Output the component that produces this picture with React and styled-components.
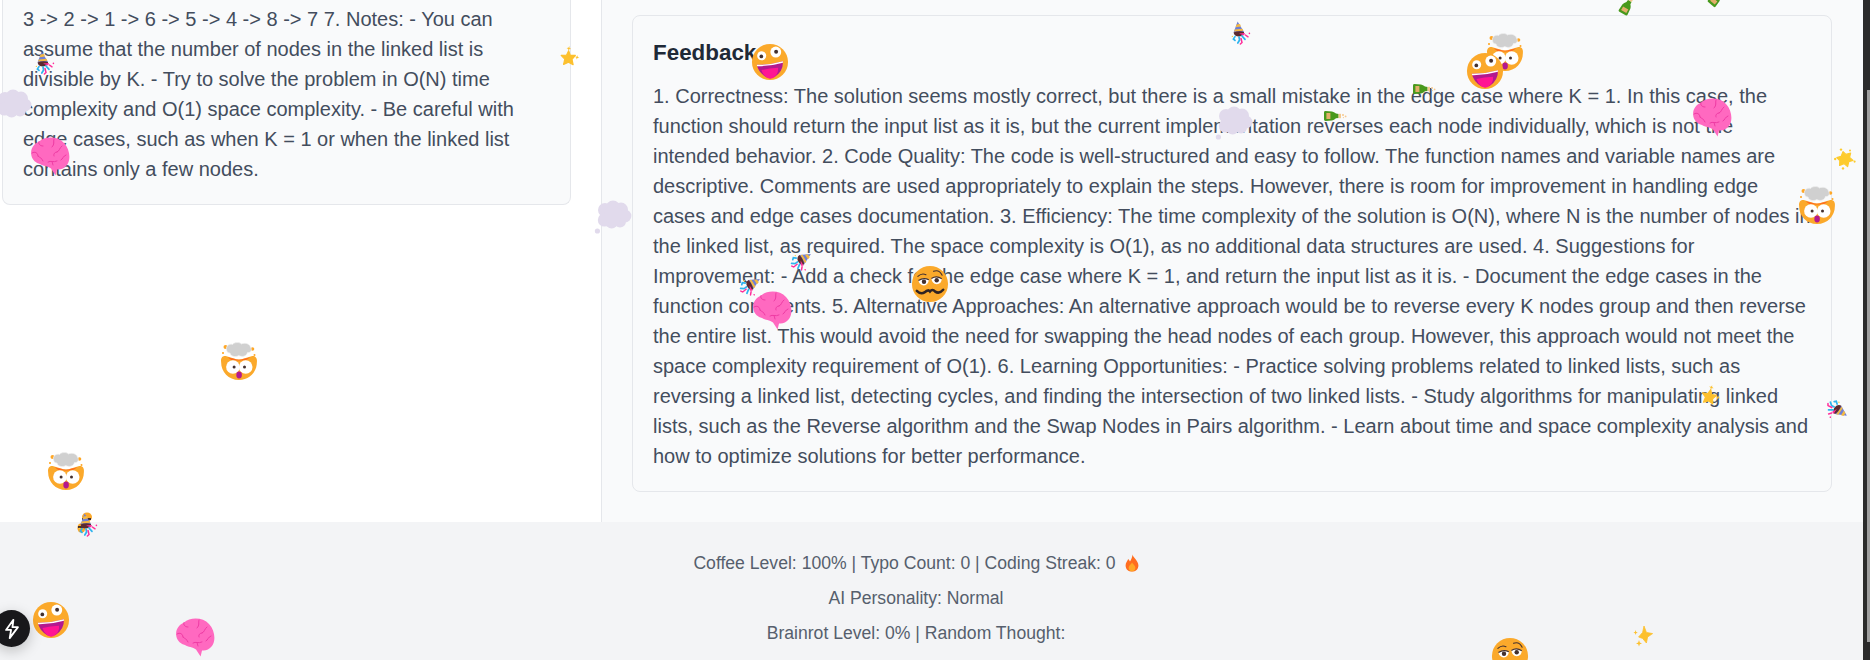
import React from "react";
import styled, { createGlobalStyle } from "styled-components";

const GlobalStyle = createGlobalStyle`
  html, body {
    margin: 0;
    height: 100%;
    overflow: hidden;
    background: #ffffff;
    font-family: "Liberation Sans", Arial, sans-serif;
  }
`;

const Page = styled.div`
  display: flex;
  width: 1870px;
  height: 660px;
  overflow: hidden;
`;

const Viewport = styled.div`
  position: relative;
  flex: 1;
  display: flex;
  flex-direction: column;
  overflow: hidden;
`;

const Main = styled.main`
  display: grid;
  grid-template-columns: 602px 1fr;
  height: 522px;
`;

const LeftPanel = styled.section`
  padding: 0 30px 0 2px;
  background: #ffffff;
  border-right: 1px solid #e5e7eb;
`;

const RightPanel = styled.section`
  padding: 15px 31px 0 30px;
  background: #f9fafb;
`;

const Card = styled.div`
  background: #f9fafb;
  border: 1px solid #e5e7eb;
  border-radius: 8px;
  padding: 20px;
`;

// the left card is scrolled, so its top edge is out of the window
const ScrolledCard = styled(Card)`
  border-top: none;
  border-radius: 0 0 8px 8px;
  padding-top: 4px;
`;

const Title = styled.h2`
  margin: 0 0 12px;
  font-size: 22.4px;
  line-height: 33px;
  font-weight: 700;
  color: #1f2937;
`;

const Body = styled.p`
  margin: 0;
  font-size: 20px;
  line-height: 30px;
  color: #434d5d;
`;

const Footer = styled.footer`
  flex: 1;
  display: flex;
  flex-direction: column;
  align-items: center;
  gap: 11px;
  padding: 29px 31px 0 0;
  background: #f3f4f6;
`;

const FooterLine = styled.div`
  display: flex;
  align-items: center;
  height: 24px;
  font-size: 17.6px;
  color: #565f6d;
`;

const FlameIcon = styled.svg`
  margin-left: 9px;
`;

const ScrollTrack = styled.div`
  width: 7px;
  padding: 90px 0 0 4px;
  box-sizing: border-box;
  background: #2b2b2b;
`;

const ScrollThumb = styled.div`
  height: 552px;
  background: #9f9f9f;
`;

const Floater = styled.div`
  position: absolute;
  left: ${(p) => p.$x}px;
  top: ${(p) => p.$y}px;
  transform: translate(-50%, -50%) rotate(${(p) => p.$rotate || 0}deg);
  line-height: 0;
  pointer-events: none;
`;

const DevButton = styled.div`
  position: absolute;
  left: -7px;
  top: 610px;
  width: 37px;
  height: 37px;
  display: flex;
  align-items: center;
  justify-content: center;
  border-radius: 50%;
  background: #18181b;
  box-shadow: 0 4px 14px rgba(0, 0, 0, 0.22);
`;

const Zany = () => (
  <svg width="37" height="37" viewBox="0 0 32 32">
    <circle cx="16" cy="16" r="15.6" fill="#fba92b" />
    <circle cx="8.8" cy="10.6" r="3.9" fill="#fff" />
    <circle cx="8.5" cy="11.2" r="1.6" fill="#43302f" />
    <circle cx="21" cy="7.4" r="4.7" fill="#fff" />
    <circle cx="21.3" cy="7.2" r="1.7" fill="#43302f" />
    <path d="M4.6 18.4 Q16 18.6 27.2 15.4 Q27.6 24 20 29 Q16 31 12.4 29 Q6 25 4.6 18.4Z" fill="#b3198f" />
    <path d="M4.6 18.4 Q16 18.6 27.2 15.4 L27.2 16.6 Q16 19.8 4.9 19.6Z" fill="#fff" />
    <path d="M8.6 23 Q15 21.5 23 21 Q23.5 27 18 30 Q15.5 31 13 29.4 Q9.5 26.5 8.6 23Z" fill="#ff1493" />
  </svg>
);

const MindBlown = () => (
  <svg width="37" height="38" viewBox="0 0 37 38">
    <circle cx="5" cy="5" r="2" fill="#ffa726" />
    <circle cx="32" cy="7" r="1.8" fill="#ffa726" />
    <circle cx="2.5" cy="11" r="1.1" fill="#ffa726" />
    <circle cx="34" cy="13" r="1" fill="#ffa726" />
    <path d="M16.5 13 h4.5 v6 h-4.5Z" fill="#fff" />
    <path d="M6 8 C5 3 10 1.5 12 2.5 C14 0 19 0 21 2 C24 0.5 29 1.5 30 5 C32 8 30 11 27 10.5 C26 15 20 15 18.5 13.5 C15 15.5 10 14.5 9.5 11 C7.5 11 6.5 10 6 8Z" fill="#d0d0d0" stroke="#f0f0f0" strokeWidth="0.7" />
    <path d="M0.6 20 C0 15 3 13.6 6 14.2 L13.5 16.6 Q18.5 18.6 23.5 16.6 L31 14.2 C34 13.6 37 15 36.4 20 C36.4 30 29 38 18.5 38 C8 38 0.6 30 0.6 20Z" fill="#fba92b" />
    <path d="M7 15.2 L13.5 16.8 Q18.5 18.8 23.5 16.8 L30 15.2 Q26 18.4 22.5 18.2 Q18.5 19 14.5 18.2 Q10 18.4 7 15.2Z" fill="#ff6b1f" />
    <circle cx="12.4" cy="25" r="6.8" fill="#fff" />
    <circle cx="25.2" cy="25" r="6.8" fill="#fff" />
    <circle cx="13.6" cy="25" r="1.5" fill="#43302f" />
    <circle cx="24" cy="25" r="1.5" fill="#43302f" />
    <ellipse cx="18.6" cy="33" rx="2.8" ry="3.4" fill="#b3198f" />
  </svg>
);

const Brain = () => (
  <svg width="40" height="40" viewBox="0 0 40 40">
    <path d="M1.5 20 C0 14 3 8 9 5.5 C15 0 28 0 34 7 C40 13 41 24 37 29 C34 33 30 34 27 33.4 L25.6 39.6 L21 32.6 C18 30 13 30 10 28 C6 27 2.5 24 1.5 20Z" fill="#ff69c0" />
    <g fill="none" stroke="#ef3ba4" strokeWidth="1" strokeLinecap="round">
      <path d="M9 5.6 C8 8 10 10 13 10" />
      <path d="M2 17 C5 15 8 17 8 20 M8 20 C10 22 12 22 13 25" />
      <path d="M24 3 C23 6 25 8 22 11" />
      <path d="M32 10 C29 12 30 15 27 16 M27 16 C25 16 23 18 24 20" />
      <path d="M18 26 C21 24 23 27 27 25 M22 25.4 L23 29 M36 19 C33 20 33 23 31 24" />
    </g>
  </svg>
);

const Woozy = () => (
  <svg width="37" height="37" viewBox="0 0 32 32">
    <circle cx="16" cy="16" r="15.6" fill="#fba92b" />
    <path d="M5.5 9.5 Q9 6 12.5 8 M19 5 Q24 3 26.5 8.5" fill="none" stroke="#43302f" strokeWidth="0.9" strokeLinecap="round" />
    <path d="M6 13 Q10.5 10 15 12.4 Q14.6 17 10.6 17.4 Q7 17 6 13Z" fill="#fff" />
    <path d="M17.2 11.2 Q21.6 8.4 26.2 11.4 Q26 16 21.8 16.2 Q17.8 15.8 17.2 11.2Z" fill="#fff" />
    <path d="M6 13 Q10.5 10 15 12.4 M17.2 11.2 Q21.6 8.4 26.2 11.4" fill="none" stroke="#43302f" strokeWidth="1" />
    <circle cx="10.8" cy="14" r="1.9" fill="#43302f" />
    <circle cx="21.8" cy="12.8" r="1.9" fill="#43302f" />
    <path d="M4.6 22 Q8 25.4 11.6 23 Q14.5 20.4 16 22.4 Q18 20 20.5 22.6 Q24 25 27.4 21" fill="none" stroke="#2f2323" strokeWidth="2.2" strokeLinecap="round" />
  </svg>
);

const Popper = () => (
  <svg width="20" height="24" viewBox="0 0 20 24">
    <path d="M6.6 0.6 L2.6 11.6 Q8 14.6 13 11 Z" fill="#6f7fd6" />
    <path d="M5.6 3.4 L9 3 L10 5.4 L4.6 6.2Z M3.7 8.6 L11.4 7.8 L12.4 9.8 L3.2 10.4Z" fill="#f4b942" />
    <path d="M2.6 11.4 Q8 9.4 13 11 Q13.6 14.8 8 15.4 Q3.2 15.2 2.6 11.4Z" fill="#5b2a2f" />
    <path d="M8 12.6 L14 12 L13 14.6Z" fill="#ff2e9a" />
    <g fill="none" stroke="#2db4ee" strokeWidth="1.7" strokeLinecap="round">
      <path d="M4 15.6 L2.4 18 L4 19.4" />
      <path d="M8 16 L8.6 19 L6.8 22" />
      <path d="M11 15 L14 18.4" />
    </g>
    <g fill="none" stroke="#ff2e9a" strokeWidth="1.5" strokeLinecap="round">
      <path d="M10 17.4 L11 21.6 L9.4 23" />
      <path d="M14.4 14 L17 15.8" />
    </g>
    <circle cx="1.4" cy="15.4" r="0.7" fill="#f4d24a" />
    <circle cx="18.4" cy="12.4" r="0.8" fill="#ff2e9a" />
  </svg>
);

const Bottle = () => (
  <svg width="24" height="12" viewBox="0 0 24 12">
    <path d="M1 2.4 Q1 1 2.4 1 L9 1.4 Q11 2 13 3.6 L15.6 4 L15.6 8 L13 8.2 Q11 10 9 10.4 L2.4 11 Q1 11 1 9.6Z" fill="#48991c" />
    <path d="M3.4 3 H7.4 V9 H3.4Z" fill="#e2ae6a" />
    <path d="M15.6 3.8 H18 V8.2 H15.6Z" fill="#f3c98f" />
    <circle cx="20" cy="5" r="1" fill="#f7c88e" />
    <circle cx="22.6" cy="6.4" r="0.9" fill="#f7c88e" />
    <circle cx="20.4" cy="7.6" r="0.6" fill="#f7c88e" />
  </svg>
);

const StarSmall = () => (
  <svg width="20" height="22" viewBox="0 0 20 22">
    <path d="M7.6 5 L10 9.4 L15 8.4 L12.4 13 L14.4 18 L9.4 16.4 L5 19.4 L5.2 14 L1 11 L6.2 9.8Z" fill="#fcc02e" stroke="#fcc02e" strokeWidth="1.2" strokeLinejoin="round" />
    <path d="M7.4 0.4 L8 2.2 L9.8 2.8 L8 3.4 L7.4 5 L6.8 3.4 L5 2.8 L6.8 2.2Z" fill="#fcc02e" />
    <path d="M17 8 L17.6 9.6 L19.4 10 L17.6 10.6 L17 12.4 L16.4 10.6 L14.8 10 L16.4 9.6Z" fill="#fcc02e" />
  </svg>
);

const Sparkle = () => (
  <svg width="20" height="22" viewBox="0 0 20 22">
    <path d="M11 1 L13.4 7.4 L19.6 8.6 L14.6 12 L13.4 18 L9.6 13.4 L5.6 12 L9.6 7.4Z" fill="#fcc02e" stroke="#fcc02e" strokeWidth="0.8" strokeLinejoin="round" />
    <path d="M2.6 5 L3.2 7 L4.8 7.6 L3.2 8.2 L2.6 10 L2 8.2 L0.4 7.6 L2 7Z" fill="#fcc02e" />
    <path d="M6 15 L6.8 17.4 L9 18.4 L6.8 19.2 L6 21.6 L5.2 19.2 L3 18.4 L5.2 17.4Z" fill="#fcc02e" />
  </svg>
);

const Burst = () => (
  <svg width="22" height="22" viewBox="0 0 22 22">
    <path d="M9 3.6 L12 6.4 L16.6 5 L15.6 9.4 L19 12.4 L14.8 13.6 L13.6 18.6 L10 15.6 L5.6 17.4 L5.8 12.6 L2.8 9.6 L7.2 8.2Z" fill="#fdcb2e" stroke="#fdcb2e" strokeWidth="1.2" strokeLinejoin="round" />
    <g fill="#fdcb2e">
      <circle cx="7" cy="1.6" r="1.2" />
      <circle cx="16" cy="2.4" r="1" />
      <circle cx="1.2" cy="11" r="1.2" />
      <circle cx="20.6" cy="13.6" r="1.1" />
      <circle cx="9" cy="20.4" r="1.2" />
    </g>
  </svg>
);

const Cloud = () => (
  <svg width="38" height="34" viewBox="0 0 38 34">
    <g fill="#e1daec">
      <circle cx="3.4" cy="31" r="2.6" />
      <circle cx="11" cy="10" r="7" />
      <circle cx="19" cy="8" r="7.4" />
      <circle cx="27" cy="9.6" r="7" />
      <circle cx="31" cy="16" r="6.4" />
      <circle cx="26" cy="21.4" r="6" />
      <circle cx="17.6" cy="22" r="6.4" />
      <circle cx="10.4" cy="20" r="6.6" />
      <circle cx="19" cy="15" r="9" />
    </g>
  </svg>
);

const Specks = () => (
  <svg width="16" height="24" viewBox="0 0 16 24">
    <ellipse cx="10" cy="5" rx="5" ry="4.6" fill="#fba92b" />
    <ellipse cx="4.4" cy="16" rx="4" ry="4.8" fill="#fba92b" />
    <path d="M5 6 h9 v2 h-9Z M1 14 h6 v2 h-6Z" fill="#43302f" />
  </svg>
);

const EMOJIS = [
  { Icon: Popper, x: 45, y: 63 },
  { Icon: StarSmall, x: 570, y: 57, rotate: 10 },
  { Icon: Cloud, x: 13, y: 106 },
  { Icon: Brain, x: 50, y: 156 },
  { Icon: Cloud, x: 613, y: 217 },
  { Icon: Zany, x: 770, y: 62 },
  { Icon: Popper, x: 1241, y: 33 },
  { Icon: Cloud, x: 1234, y: 123 },
  { Icon: Popper, x: 802, y: 262, rotate: 65 },
  { Icon: Popper, x: 751, y: 287, rotate: 65 },
  { Icon: Woozy, x: 930, y: 284 },
  { Icon: Brain, x: 772, y: 310 },
  { Icon: Bottle, x: 1628, y: 4, rotate: -60 },
  { Icon: Bottle, x: 1718, y: -4, rotate: -50 },
  { Icon: MindBlown, x: 1505, y: 52 },
  { Icon: Zany, x: 1485, y: 71 },
  { Icon: Bottle, x: 1424, y: 89 },
  { Icon: Bottle, x: 1335, y: 116 },
  { Icon: Brain, x: 1712, y: 117 },
  { Icon: Burst, x: 1845, y: 159 },
  { Icon: MindBlown, x: 1817, y: 205 },
  { Icon: MindBlown, x: 239, y: 361 },
  { Icon: MindBlown, x: 66, y: 471 },
  { Icon: Specks, x: 85, y: 524 },
  { Icon: Popper, x: 88, y: 525 },
  { Icon: Zany, x: 51, y: 620 },
  { Icon: Brain, x: 195, y: 637 },
  { Icon: StarSmall, x: 1711, y: 396, rotate: 20 },
  { Icon: Popper, x: 1836, y: 411, rotate: 130 },
  { Icon: Woozy, x: 1510, y: 656 },
  { Icon: Sparkle, x: 1643, y: 636 },
];

const App = () => {
  return (
    <Page>
      <GlobalStyle />
      <Viewport>
        <Main>
          <LeftPanel>
            <ScrolledCard>
              <Body>
                3 -&gt; 2 -&gt; 1 -&gt; 6 -&gt; 5 -&gt; 4 -&gt; 8 -&gt; 7 7. Notes: - You can assume that the number of nodes in the linked list is divisible by K. - Try to solve the problem in O(N) time complexity and O(1) space complexity. - Be careful with edge cases, such as when K = 1 or when the linked list contains only a few nodes.
              </Body>
            </ScrolledCard>
          </LeftPanel>
          <RightPanel>
            <Card>
              <Title>Feedback</Title>
              <Body>
                1. Correctness: The solution seems mostly correct, but there is a small mistake in the edge case where K = 1. In this case, the function should return the input list as it is, but the current implementation reverses each node individually, which is not the intended behavior. 2. Code Quality: The code is well-structured and easy to follow. The function names and variable names are descriptive. Comments are used appropriately to explain the steps. However, there is room for improvement in handling edge cases and edge cases documentation. 3. Efficiency: The time complexity of the solution is O(N), where N is the number of nodes in the linked list, as required. The space complexity is O(1), as no additional data structures are used. 4. Suggestions for Improvement: - Add a check for the edge case where K = 1, and return the input list as it is. - Document the edge cases in the function comments. 5. Alternative Approaches: An alternative approach would be to reverse every K nodes group and then reverse the entire list. This would avoid the need for swapping the head nodes of each group. However, this approach would not meet the space complexity requirement of O(1). 6. Learning Opportunities: - Practice solving problems related to linked lists, such as reversing a linked list, detecting cycles, and finding the intersection of two linked lists. - Study algorithms for manipulating linked lists, such as the Reverse algorithm and the Swap Nodes in Pairs algorithm. - Learn about time and space complexity analysis and how to optimize solutions for better performance.
              </Body>
            </Card>
          </RightPanel>
        </Main>
        <Footer>
          <FooterLine>
            Coffee Level: 100% | Typo Count: 0 | Coding Streak: 0
            <FlameIcon width="14" height="18" viewBox="0 0 14 18">
              <path d="M7.4 0.4 C8 3.4 13.4 6.6 13.4 11.4 C13.4 15.2 10.6 17.6 7 17.6 C3.4 17.6 0.6 15.2 0.6 11.4 C0.6 8.6 2.4 7 3.2 5 C4 6 4.6 6.6 5 7.4 C6.2 5.6 7.4 3 7.4 0.4Z" fill="#ff6d1f" />
              <path d="M7 8.4 C8 10 10.4 11.4 10.4 13.8 C10.4 16 8.8 17.4 7 17.4 C5.2 17.4 3.6 16 3.6 13.8 C3.6 11.6 6 10.4 7 8.4Z" fill="#ffa726" />
            </FlameIcon>
          </FooterLine>
          <FooterLine>AI Personality: Normal</FooterLine>
          <FooterLine>Brainrot Level: 0% | Random Thought:</FooterLine>
        </Footer>
        {EMOJIS.map(({ Icon, x, y, rotate }, i) => (
          <Floater key={i} $x={x} $y={y} $rotate={rotate}>
            <Icon />
          </Floater>
        ))}
        <DevButton>
          <svg width="22" height="22" viewBox="0 0 24 24" fill="none" stroke="#fff" strokeWidth="2" strokeLinejoin="round">
            <path d="M13.5 2 L5.5 13 H11 L9.5 22 L18.5 10 H12.5 Z" />
          </svg>
        </DevButton>
      </Viewport>
      <ScrollTrack>
        <ScrollThumb />
      </ScrollTrack>
    </Page>
  );
};

export default App;
